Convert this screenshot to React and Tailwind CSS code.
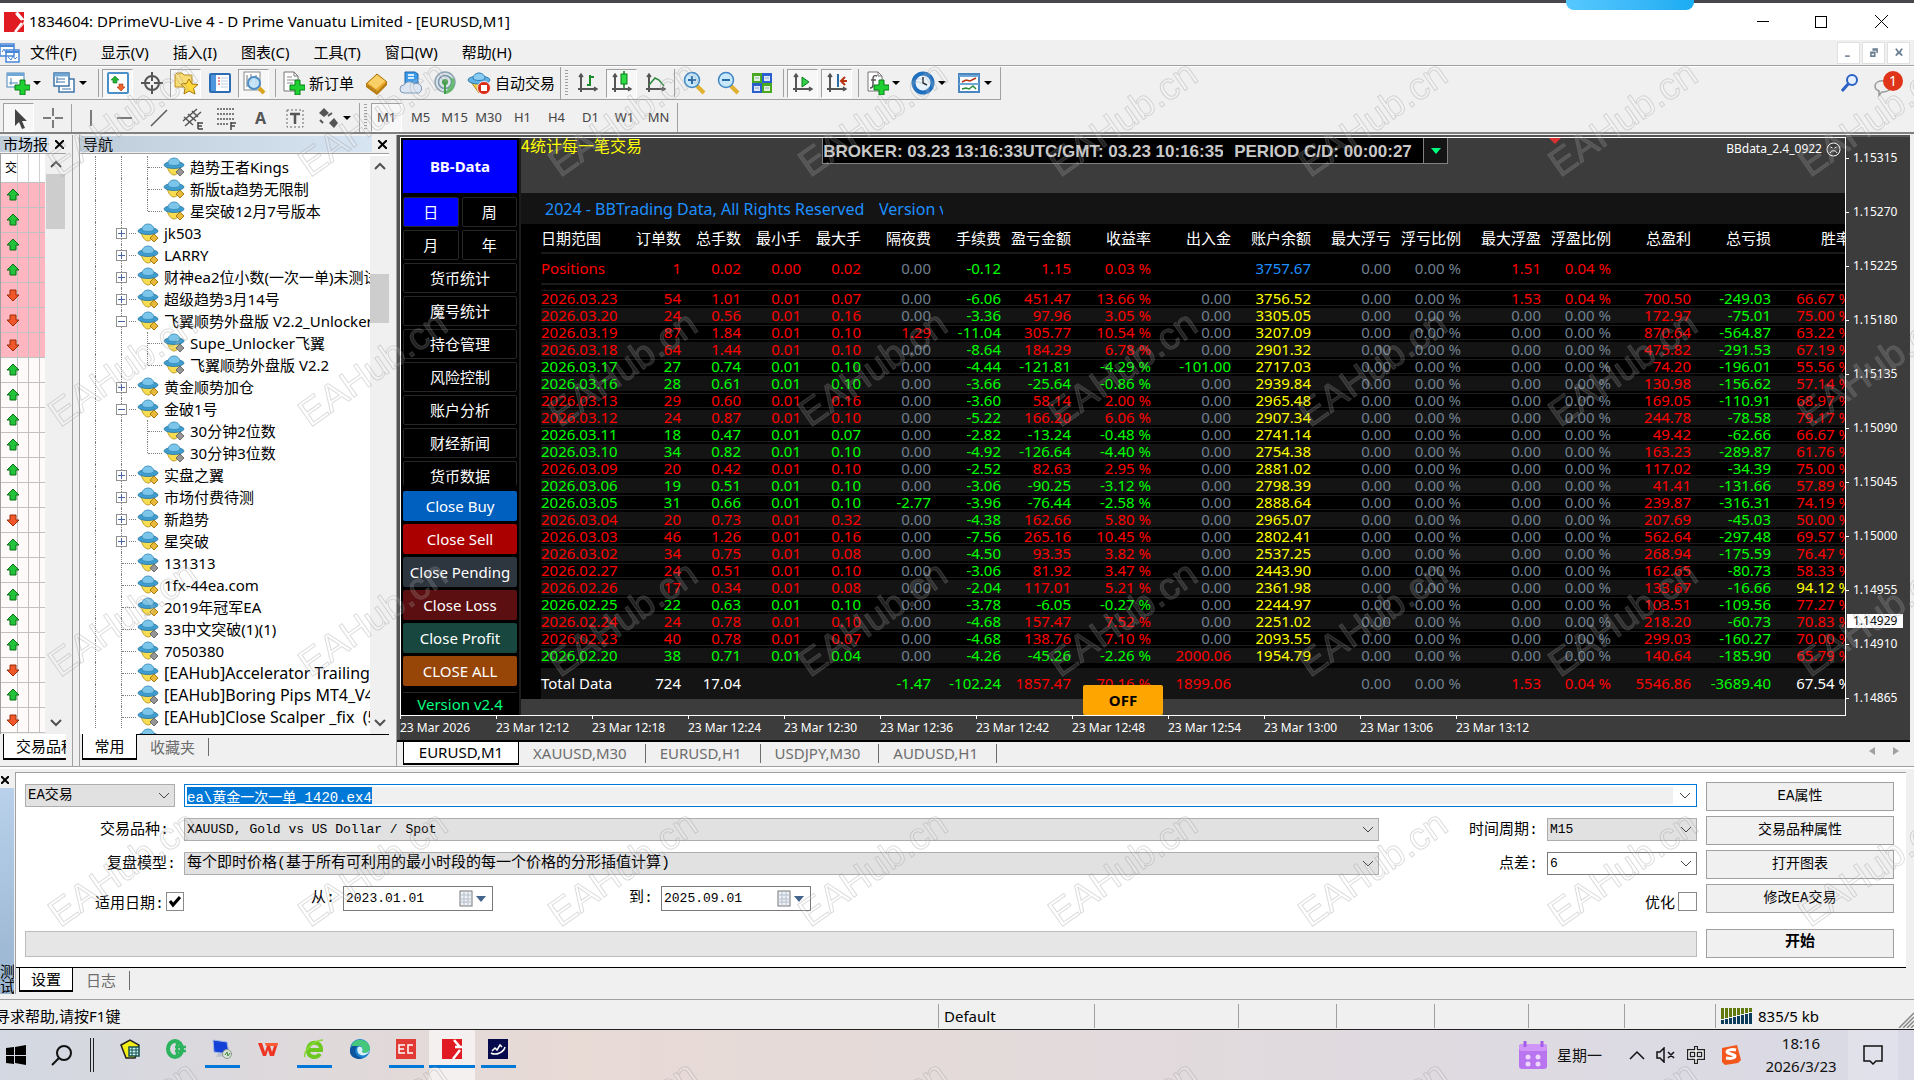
import { useEffect, useRef } from 'react';

const UI = "font-['Noto_Sans','Noto_Sans_CJK_SC',sans-serif]";
const SONG = "font-['Liberation_Mono','Noto_Sans_CJK_SC',monospace]";

/* ---------- data ---------- */

const menus = ['文件(F)', '显示(V)', '插入(I)', '图表(C)', '工具(T)', '窗口(W)', '帮助(H)'];
const frames = ['M1', 'M5', 'M15', 'M30', 'H1', 'H4', 'D1', 'W1', 'MN'];

// u = up tick, d = down tick
const ticks = 'uuuuddduuuuuuduuuuudud'.split('');

// [name, level, toggle, badge]
const tree = [
  ['趋势王者Kings', 2, '', 'gray'],
  ['新版ta趋势无限制', 2, '', 'gold'],
  ['星突破12月7号版本', 2, 'last', 'gold'],
  ['jk503', 1, '+', 'gold'],
  ['LARRY', 1, '+', 'gold'],
  ['财神ea2位小数(一次一单)未测试', 1, '+', 'gold'],
  ['超级趋势3月14号', 1, '+', 'gold'],
  ['飞翼顺势外盘版 V2.2_Unlocker', 1, '-', 'gold'],
  ['Supe_Unlocker飞翼', 2, '', 'gray'],
  ['飞翼顺势外盘版 V2.2', 2, 'last', 'gray'],
  ['黄金顺势加仓', 1, '+', 'gold'],
  ['金破1号', 1, '-', 'gold'],
  ['30分钟2位数', 2, '', 'gray'],
  ['30分钟3位数', 2, 'last', 'gray'],
  ['实盘之翼', 1, '+', 'gold'],
  ['市场付费待测', 1, '+', 'gold'],
  ['新趋势', 1, '+', 'gold'],
  ['星突破', 1, '+', 'gold'],
  ['131313', 1, '', 'gray'],
  ['1fx-44ea.com', 1, '', 'gold'],
  ['2019年冠军EA', 1, '', 'gold'],
  ['33中文突破(1)(1)', 1, '', 'gray'],
  ['7050380', 1, '', 'gray'],
  ['[EAHub]Accelerator Trailing', 1, '', 'gold'],
  ['[EAHub]Boring Pips MT4_V4', 1, '', 'gray'],
  ['[EAHub]Close Scalper _fix  (5)', 1, '', 'gray'],
];

const heads = ['日期范围', '订单数', '总手数', '最小手', '最大手', '隔夜费', '手续费', '盈亏金额', '收益率', '出入金', '账户余额', '最大浮亏', '浮亏比例', '最大浮盈', '浮盈比例', '总盈利', '总亏损', '胜率'];

// date, orders, lots, min, max, swap, commission, p/l, rate, deposit, balance, profit, loss, win rate
const days = [
  '2026.03.23|54|1.01|0.01|0.07|0.00|-6.06|451.47|13.66 %|0.00|3756.52|700.50|-249.03|66.67 %',
  '2026.03.20|24|0.56|0.01|0.16|0.00|-3.36|97.96|3.05 %|0.00|3305.05|172.97|-75.01|75.00 %',
  '2026.03.19|87|1.84|0.01|0.10|1.29|-11.04|305.77|10.54 %|0.00|3207.09|870.64|-564.87|63.22 %',
  '2026.03.18|64|1.44|0.01|0.10|0.00|-8.64|184.29|6.78 %|0.00|2901.32|475.82|-291.53|67.19 %',
  '2026.03.17|27|0.74|0.01|0.10|0.00|-4.44|-121.81|-4.29 %|-101.00|2717.03|74.20|-196.01|55.56 %',
  '2026.03.16|28|0.61|0.01|0.10|0.00|-3.66|-25.64|-0.86 %|0.00|2939.84|130.98|-156.62|57.14 %',
  '2026.03.13|29|0.60|0.01|0.16|0.00|-3.60|58.14|2.00 %|0.00|2965.48|169.05|-110.91|68.97 %',
  '2026.03.12|24|0.87|0.01|0.10|0.00|-5.22|166.20|6.06 %|0.00|2907.34|244.78|-78.58|79.17 %',
  '2026.03.11|18|0.47|0.01|0.07|0.00|-2.82|-13.24|-0.48 %|0.00|2741.14|49.42|-62.66|66.67 %',
  '2026.03.10|34|0.82|0.01|0.10|0.00|-4.92|-126.64|-4.40 %|0.00|2754.38|163.23|-289.87|61.76 %',
  '2026.03.09|20|0.42|0.01|0.10|0.00|-2.52|82.63|2.95 %|0.00|2881.02|117.02|-34.39|75.00 %',
  '2026.03.06|19|0.51|0.01|0.10|0.00|-3.06|-90.25|-3.12 %|0.00|2798.39|41.41|-131.66|57.89 %',
  '2026.03.05|31|0.66|0.01|0.10|-2.77|-3.96|-76.44|-2.58 %|0.00|2888.64|239.87|-316.31|74.19 %',
  '2026.03.04|20|0.73|0.01|0.32|0.00|-4.38|162.66|5.80 %|0.00|2965.07|207.69|-45.03|50.00 %',
  '2026.03.03|46|1.26|0.01|0.16|0.00|-7.56|265.16|10.45 %|0.00|2802.41|562.64|-297.48|69.57 %',
  '2026.03.02|34|0.75|0.01|0.08|0.00|-4.50|93.35|3.82 %|0.00|2537.25|268.94|-175.59|76.47 %',
  '2026.02.27|24|0.51|0.01|0.10|0.00|-3.06|81.92|3.47 %|0.00|2443.90|162.65|-80.73|58.33 %',
  '2026.02.26|17|0.34|0.01|0.08|0.00|-2.04|117.01|5.21 %|0.00|2361.98|133.67|-16.66|94.12 %',
  '2026.02.25|22|0.63|0.01|0.10|0.00|-3.78|-6.05|-0.27 %|0.00|2244.97|103.51|-109.56|77.27 %',
  '2026.02.24|24|0.78|0.01|0.10|0.00|-4.68|157.47|7.52 %|0.00|2251.02|218.20|-60.73|70.83 %',
  '2026.02.23|40|0.78|0.01|0.07|0.00|-4.68|138.76|7.10 %|0.00|2093.55|299.03|-160.27|70.00 %',
  '2026.02.20|38|0.71|0.01|0.04|0.00|-4.26|-45.26|-2.26 %|2000.06|1954.79|140.64|-185.90|65.79 %',
].map((line) => line.split('|'));

const prices = ['1.15315', '1.15270', '1.15225', '1.15180', '1.15135', '1.15090', '1.15045', '1.15000', '1.14955', '1.14910', '1.14865'];
const times = ['2026', '12:12', '12:18', '12:24', '12:30', '12:36', '12:42', '12:48', '12:54', '13:00', '13:06', '13:12'];

const RED = 'text-[#ff0000]';
const GREEN = 'text-[#00ff00]';
const GRAY = 'text-[#708090]';

function signColor(v) {
  const n = parseFloat(v);
  if (n === 0) return GRAY;
  return n < 0 ? GREEN : RED;
}

/* ---------- toolbar icons ---------- */

const Svg = ({ s = 24, children }) => (
  <svg width={s} height={s} viewBox="0 0 24 24" fill="none" className="shrink-0">{children}</svg>
);

const Plus = () => <path d="M14 9h5v5h5v5h-5v5h-5v-5H9v-5h5z" fill="#1fd032" stroke="#0a7d18" />;

const Axes = () => (
  <g stroke="#555" strokeWidth="2">
    <path d="M5 3v18M2 18h19" />
    <path d="M3 6l2-3 2 3M18 16l3 2-3 2" strokeWidth="1.5" />
  </g>
);

const Page = () => (
  <g>
    <path d="M3 1h10l4 4v15H3z" fill="#fff" stroke="#777" />
    <path d="M13 1v4h4" stroke="#777" />
  </g>
);

const icons = {
  newChart: (
    <Svg>
      <rect x="1" y="2" width="17" height="14" fill="#fff" stroke="#4a86b8" />
      <rect x="1" y="2" width="17" height="3" fill="#6fa8d6" />
      <path d="M5 7v7M3 12h9" stroke="#4a86b8" />
      <Plus />
    </Svg>
  ),
  profiles: (
    <Svg>
      <rect x="7" y="8" width="15" height="13" fill="#fff" stroke="#3f74a8" strokeWidth="1.5" />
      <path d="M10 18h9" stroke="#3f74a8" />
      <rect x="2" y="2" width="15" height="13" fill="#fff" stroke="#3f74a8" strokeWidth="1.5" />
      <path d="M2 4h15" stroke="#6fa8d6" strokeWidth="3" />
      <path d="M5 6v6M4 11h9M5 8h8" stroke="#3f74a8" />
    </Svg>
  ),
  market: (
    <Svg>
      <rect x="2" y="2" width="20" height="20" rx="1" fill="#fff" stroke="#4a90c8" strokeWidth="2" />
      <path d="M9 5l4 4h-2v3H7V9H5z" fill="#21b535" stroke="#0a7d18" strokeWidth=".6" />
      <path d="M15 20l-4-4h2v-3h4v3h2z" fill="#f0642d" stroke="#a33208" strokeWidth=".6" />
    </Svg>
  ),
  target: (
    <Svg>
      <circle cx="12" cy="12" r="7" stroke="#555" strokeWidth="2" />
      <path d="M12 1v9M12 14v9M1 12h9M14 12h9" stroke="#555" strokeWidth="2" />
    </Svg>
  ),
  star: (
    <Svg>
      <path d="M1 4l2-2h5l2 2h8v12H1z" fill="#f9dc73" stroke="#b98b1c" />
      <path d="M15 8l3 5 6 .5-4.500 4L21 23l-6-3-5 3 1-6-4-4 5.500-.5z" fill="#ffd93b" stroke="#a87408" />
    </Svg>
  ),
  list: (
    <Svg>
      <rect x="2" y="3" width="20" height="18" rx="1" fill="#fff" stroke="#2c6cb3" strokeWidth="2" />
      <rect x="3" y="4" width="5" height="16" fill="#4f97dc" />
      <path d="M10 7h2M10 10h2M10 13h2" stroke="#d22" />
      <path d="M13 7h7M13 10h7M13 13h7M13 16h7" stroke="#b9cfe6" />
    </Svg>
  ),
  tester: (
    <Svg>
      <rect x="2" y="1" width="16" height="18" fill="#fff" stroke="#888" />
      <path d="M5 4v12M9 3v9M14 4v10" stroke="#777" />
      <circle cx="12" cy="12" r="6" fill="#bfe0f8" fillOpacity=".85" stroke="#4c8ec6" strokeWidth="2" />
      <path d="M17 17l5 5" stroke="#d9a520" strokeWidth="4" />
    </Svg>
  ),
  order: (
    <Svg>
      <Page />
      <path d="M6 6h5M6 9h8M6 12h6" stroke="#888" />
      <Plus />
    </Svg>
  ),
  gold: (
    <Svg>
      <path d="M1 13L12 3l10 8-9 10z" fill="#e8a92a" stroke="#a66d08" />
      <path d="M3 12L12 4l8 6-9 8z" fill="#f8d067" />
      <path d="M1 13v3l11 8 10-10v-3L12 21z" fill="#b87c10" />
    </Svg>
  ),
  cloud: (
    <Svg>
      <path d="M6 1h10l3 2v14H6z" fill="#3f9be8" stroke="#1b66ac" />
      <path d="M9 4h6M9 7h6" stroke="#d6ecff" strokeWidth="2" />
      <path d="M5 22a4 4 0 010-8 6 6 0 0110-1 5 5 0 015 9z" fill="#dbe6f2" stroke="#7f99b8" />
    </Svg>
  ),
  signal: (
    <Svg>
      <circle cx="12" cy="11" r="10" fill="#d9e3ea" stroke="#8fa3b3" strokeWidth="1.500" />
      <circle cx="12" cy="11" r="6.500" stroke="#7b96aa" strokeWidth="1.500" />
      <path d="M15 5a7 7 0 010 12l-3 6c8-1 11-8 9-15z" fill="#52b557" opacity=".8" />
      <circle cx="12" cy="11" r="3" fill="#3fa046" />
      <path d="M12 12v11" stroke="#3fa046" strokeWidth="2" />
    </Svg>
  ),
  auto: (
    <Svg>
      <path d="M4 11l8 11 8-11z" fill="#f7cf45" stroke="#b48512" />
      <ellipse cx="12" cy="9" rx="11" ry="4" fill="#63b3e6" stroke="#2d7cb5" />
      <path d="M6 8c0-8 12-8 12 0-3 2-9 2-12 0z" fill="#8accf2" stroke="#2d7cb5" />
      <circle cx="17" cy="17" r="6.500" fill="#dc2a18" stroke="#fff" strokeWidth=".8" />
      <rect x="14" y="14" width="6" height="6" fill="#fff" />
    </Svg>
  ),
  bars: <Svg><Axes /><path d="M14 4v11M14 6h4M11 14h3" stroke="#1a8a2a" strokeWidth="2" /></Svg>,
  candle: <Svg><Axes /><path d="M14 0v17" stroke="#0a7d18" strokeWidth="1.500" /><rect x="11" y="3" width="6" height="10" fill="#2ddb46" stroke="#0a7d18" /></Svg>,
  line: <Svg><Axes /><path d="M5 14l6-7 4 2 5 6" stroke="#2a8a3a" strokeWidth="1.500" /></Svg>,
  zoomIn: <Svg><path d="M15 15l7 7" stroke="#e0b030" strokeWidth="4" /><circle cx="10" cy="9" r="7.500" fill="#c8e8fb" stroke="#3f86c4" strokeWidth="1.500" /><path d="M6 9h8M10 5v8" stroke="#2a6aa5" strokeWidth="2" /></Svg>,
  zoomOut: <Svg><path d="M15 15l7 7" stroke="#e0b030" strokeWidth="4" /><circle cx="10" cy="9" r="7.500" fill="#c8e8fb" stroke="#3f86c4" strokeWidth="1.500" /><path d="M6 9h8" stroke="#2a6aa5" strokeWidth="2" /></Svg>,
  tile: (
    <Svg>
      <path d="M2 2h10v10H2zM12 12h10v10H12z" fill="#49a820" />
      <path d="M12 2h10v10H12zM2 12h10v10H2z" fill="#2a5fd0" />
      <path d="M4 5h6v5H4zM14 5h6v5h-6zM4 15h6v5H4zM14 15h6v5h-6z" fill="#fff" opacity=".85" />
      <path d="M5 7h4M15 7h4M5 17h4M15 17h4" stroke="#8fb0c8" />
    </Svg>
  ),
  scroll: <Svg><Axes /><path d="M11 6l7 5-7 5z" fill="#2fd048" stroke="#0a7d18" /></Svg>,
  shift: <Svg><Axes /><path d="M13 3v13" stroke="#2a6aa5" strokeWidth="2" /><path d="M22 10h-5m3-4l-4 4 4 4" stroke="#b8320e" strokeWidth="2" /></Svg>,
  indicator: <Svg><Page /><path d="M12 5c-3-1-4 0-4 3v6c0 2-1 3-3 3M6 9h5" stroke="#555" strokeWidth="1.500" /><Plus /></Svg>,
  clock: (
    <Svg>
      <circle cx="12" cy="12" r="9.500" fill="#e8f3fc" stroke="#1f6fc0" strokeWidth="4" />
      <path d="M12 6v6l4 2" stroke="#333" strokeWidth="1.500" />
    </Svg>
  ),
  template: (
    <Svg>
      <rect x="2" y="3" width="20" height="18" fill="#fff" stroke="#4a86c0" strokeWidth="2" />
      <path d="M2 5h20M2 13h20" stroke="#6fa8d6" strokeWidth="2" />
      <path d="M5 11l4-2 4 1 6-3" stroke="#b8320e" strokeWidth="1.500" />
      <path d="M5 18l4-1 3 1 4-3 3 3" stroke="#2a8a3a" strokeWidth="1.500" />
    </Svg>
  ),
  cursor: <Svg><path d="M8 3v17l4-4 3 7 3-1-3-7h5z" fill="#444" /></Svg>,
  cross: <Svg><path d="M12 2v8M12 14v8M2 12h8M14 12h8" stroke="#555" strokeWidth="1.500" /></Svg>,
  vline: <Svg><path d="M12 4v16" stroke="#555" strokeWidth="1.500" /></Svg>,
  hline: <Svg><path d="M4 12h15" stroke="#555" strokeWidth="1.500" /></Svg>,
  trend: <Svg><path d="M4 20L20 4" stroke="#555" strokeWidth="1.500" /></Svg>,
  channel: (
    <Svg>
      <path d="M2 15L16 3M4 20L20 6M3 11l9 8M7 8l8 7M11 5l6 6" stroke="#555" strokeWidth="1.500" />
      <path d="M17 17h5M17 20h4M17 23h5M17 16v7" stroke="#444" strokeWidth="1.500" />
    </Svg>
  ),
  fibo: (
    <Svg>
      <path d="M2 3h18M2 8h18M2 13h18M2 18h11" stroke="#555" strokeDasharray="2 1" strokeWidth="1.500" />
      <path d="M16 17h5M16 20h4M16 16v8" stroke="#444" strokeWidth="1.500" />
    </Svg>
  ),
  label: (
    <Svg>
      <rect x="4" y="4" width="16" height="17" stroke="#666" strokeDasharray="2 2" />
      <path d="M7 8h10M12 8v10" stroke="#555" strokeWidth="2.500" />
    </Svg>
  ),
  shapes: (
    <Svg>
      <path d="M8 2l5 5-5 4-5-4zM18 12l4 5-4 5-5-5z" fill="#555" />
      <path d="M4 14l3 3M12 10l4-3" stroke="#555" strokeWidth="2" />
    </Svg>
  ),
};

const Sep = ({ tight }) => <span className={`h-[28px] w-px shrink-0 bg-[#a0a0a0] ${tight ? 'mr-[3px]' : 'mx-[3px]'}`} />;
const Grip = () => <span className="mx-1 h-[27px] w-[3px] shrink-0 bg-[repeating-linear-gradient(#a0a0a0_0_1px,transparent_1px_3px)]" />;

function Tool({ icon, name, on, children }) {
  return (
    <button
      type="button"
      aria-label={name}
      className={`mr-[3px] flex h-[29px] w-[31px] shrink-0 items-center justify-center ${on ? 'border border-[#a0a0a0] border-r-white border-b-white bg-[#f7f7f7]' : ''}`}
    >
      {icon ? icons[icon] : children}
    </button>
  );
}

function DropTool({ icon, name }) {
  return (
    <button type="button" aria-label={name} className="flex h-[29px] w-[46px] shrink-0 items-center pl-[3px]">
      {icons[icon]}
      <span className="ml-[3px] border-x-4 border-t-4 border-x-transparent border-t-black" />
    </button>
  );
}

function DLogo({ s }) {
  return (
    <svg width={s} height={s} viewBox="0 0 20 20">
      <path d="M0 0h13l-1 3 5 5h3l-1 4-6 8H0z" fill="#e11b22" />
      <path d="M14 0h6v7zM20 12v8h-7z" fill="#e11b22" />
      <path d="M12 1l6 7M18 11l-7 9" stroke="#fff" strokeWidth="2.500" />
    </svg>
  );
}

function TitleBar() {
  return (
    <header className="flex h-[40px] shrink-0 items-center border-t-[3px] border-[#4a464e] bg-white pl-1">
      <DLogo s={20} />
      <h1 className="ml-[5px] text-[15px] whitespace-nowrap text-black">1834604: DPrimeVU-Live 4 - D Prime Vanuatu Limited - [EURUSD,M1]</h1>
      <div className="ml-auto flex items-center pr-[2px]">
        <button type="button" aria-label="最小化" className="flex w-[58px] justify-center"><span className="h-px w-3 bg-black" /></button>
        <button type="button" aria-label="最大化" className="flex w-[58px] justify-center"><span className="h-3 w-3 border border-black" /></button>
        <button type="button" aria-label="关闭" className="flex w-[62px] justify-center">
          <svg width="13" height="13" viewBox="0 0 13 13" stroke="#000"><path d="M0 0l13 13M13 0L0 13" /></svg>
        </button>
      </div>
    </header>
  );
}

function MenuBar() {
  return (
    <nav className="flex h-[26px] shrink-0 items-center border-b border-[#a0a0a0] bg-[#f0f0f0]">
      <svg width="20" height="20" viewBox="0 0 20 20" fill="#fff" stroke="#4a86d8">
        <path d="M0 1h14v12H0zM6 7h13v12H6z" strokeWidth="1.500" />
        <path d="M0 3h14M6 9h13" strokeWidth="2" />
        <path d="M2 9l2-3 2 4M8 14l3 3 2-4 2 3 2-2" fill="none" />
      </svg>
      <ul className="ml-[10px] flex gap-[24px] text-[15px]">
        {menus.map((m) => (
          <li key={m}><button type="button" className="whitespace-nowrap">{m}</button></li>
        ))}
      </ul>
      <div className="mr-1 ml-auto flex gap-[2px]">
        {['M4 12h6v2H4z', 'M7 3h7v6h-2V6H7zM4 7h7v7H4zM6 10v2h3v-2z', 'M4 4l2-1 3 4 3-4 2 1-3 4 3 4-2 1-3-3-3 3-2-1 3-4z'].map((d) => (
          <button type="button" aria-label="窗口控制" key={d} className="flex h-[22px] w-[23px] items-center justify-center border border-[#e0e0e0] bg-white">
            <svg width="14" height="14" viewBox="0 0 18 18" fill="#6c7f93" fillRule="evenodd"><path d={d} /></svg>
          </button>
        ))}
      </div>
    </nav>
  );
}

function Toolbars() {
  return (
    <div className="flex h-[68px] shrink-0 border-t border-b-2 border-t-white border-b-[#808080] bg-[#f0f0f0]">
      <div className="flex flex-col">
        <div className="flex h-[33px] items-center border-r border-b border-[#a0a0a0] pl-[3px]">
          <DropTool icon="newChart" name="新图表" />
          <DropTool icon="profiles" name="配置" />
          <Sep />
          <Tool icon="market" name="市场报价" on />
          <Tool icon="target" name="数据窗口" />
          <Tool icon="star" name="导航" on />
          <Tool icon="list" name="终端" />
          <Tool icon="tester" name="策略测试" on />
          <Sep />
          <button type="button" className="flex h-[29px] w-[82px] shrink-0 items-center gap-1 pl-[2px] text-[15px] whitespace-nowrap">
            {icons.order}新订单
          </button>
          <Tool icon="gold" name="MetaEditor" />
          <Tool icon="cloud" name="云" />
          <Tool icon="signal" name="信号" />
          <button type="button" className="flex h-[29px] w-[97px] shrink-0 items-center gap-1 pl-1 text-[15px] whitespace-nowrap">
            {icons.auto}自动交易
          </button>
          <span className="h-full w-px bg-[#a0a0a0]" />
          <Grip />
          <Tool icon="bars" name="柱状图" />
          <Tool icon="candle" name="阴阳烛" on />
          <Tool icon="line" name="折线图" />
          <Sep tight />
          <Tool icon="zoomIn" name="放大" />
          <Tool icon="zoomOut" name="缩小" />
          <Tool icon="tile" name="排列" />
          <Sep />
          <Tool icon="scroll" name="滚动" on />
          <Tool icon="shift" name="平移" on />
          <Sep />
          <DropTool icon="indicator" name="指标" />
          <DropTool icon="clock" name="周期" />
          <DropTool icon="template" name="模板" />
        </div>
        <div className="flex h-[32px] items-center pt-[3px] pl-[3px]">
          <Tool icon="cursor" name="指针" on />
          <Tool icon="cross" name="十字" />
          <Sep tight />
          <Tool icon="vline" name="垂直线" />
          <Tool icon="hline" name="水平线" />
          <Tool icon="trend" name="趋势线" />
          <Tool icon="channel" name="通道" />
          <Tool icon="fibo" name="斐波那契" />
          <Tool name="文字"><b className="text-[16px] text-[#555]">A</b></Tool>
          <Tool icon="label" name="标签" />
          <DropTool icon="shapes" name="图形" />
          <span className="h-full w-px bg-[#a0a0a0]" />
          <Grip />
          {frames.map((f) => (
            <Tool key={f} name={f} on={f === 'M1'}><span className="text-[13px] text-[#444]">{f}</span></Tool>
          ))}
          <span className="h-full w-px bg-[#a0a0a0]" />
        </div>
      </div>
      <div className="ml-auto flex items-start gap-[14px] pt-[4px] pr-[7px]">
        <button type="button" aria-label="搜索" className="pt-[3px]">
          <svg width="18" height="18" viewBox="0 0 18 18" fill="none" stroke="#2b62c4">
            <circle cx="11" cy="6" r="5" fill="#e5efff" strokeWidth="2" />
            <path d="M8 9l-7 8" strokeWidth="3" />
          </svg>
        </button>
        <button type="button" aria-label="消息">
          <svg width="34" height="26" viewBox="0 0 34 26">
            <path d="M2 15c0-7 16-7 16 0 0 5-6 6-9 6l-3 3v-4c-3-1-4-3-4-5z" fill="#eee" stroke="#999" strokeWidth="1.500" />
            <circle cx="20" cy="10" r="10" fill="#e0341a" />
            <text x="20" y="15" fill="#fff" fontSize="14" textAnchor="middle">1</text>
          </svg>
        </button>
      </div>
    </div>
  );
}

/* ---------- left docks ---------- */

function Chevron({ down }) {
  return (
    <svg width="12" height="8" viewBox="0 0 12 8" fill="none" stroke="#505050" strokeWidth="2" className={down ? '' : 'rotate-180'}>
      <path d="M1 1l5 5 5-5" />
    </svg>
  );
}

function ScrollBar({ thumb }) {
  return (
    <div className="flex w-[19px] shrink-0 flex-col items-center bg-[#f0f0f0]">
      <div className="flex h-[20px] items-center"><Chevron /></div>
      <div className="w-full flex-1"><div className={`bg-[#cdcdcd] ${thumb}`} /></div>
      <div className="flex h-[22px] items-center"><Chevron down /></div>
    </div>
  );
}

function DockHead({ title }) {
  return (
    <div className="flex h-[19px] shrink-0 items-center border-b border-[#a0a0a0]">
      <h2 className="h-[16px] min-w-0 flex-1 overflow-hidden bg-linear-to-r from-[#bfcddb] to-[#d7e4f2] pl-[3px] text-[15px] leading-[16px] whitespace-nowrap">{title}</h2>
      <button type="button" aria-label="关闭" className="flex w-[17px] justify-end pr-[2px]">
        <svg width="9" height="9" viewBox="0 0 9 9" stroke="#000" strokeWidth="2"><path d="M0 0l9 9M9 0L0 9" /></svg>
      </button>
    </div>
  );
}

function Arrow({ dir }) {
  return dir === 'u' ? (
    <svg width="14" height="14" viewBox="0 0 14 14"><path d="M7 1l6 6h-3v5H4V7H1z" fill="#22c23a" stroke="#0a6f16" /></svg>
  ) : (
    <svg width="14" height="14" viewBox="0 0 14 14"><path d="M7 13l6-6h-3V2H4v5H1z" fill="#f0582a" stroke="#9c2c08" /></svg>
  );
}

function MarketWatch() {
  return (
    <section className="flex w-[73px] shrink-0 flex-col border-r border-[#a0a0a0] pr-[6px]">
      <DockHead title="市场报价" />
      <div className="flex min-h-0 flex-1 overflow-hidden border-l border-[#a0a0a0]">
        <table className="w-[44px] table-fixed border-collapse self-start text-[12px]">
          <colgroup><col className="w-[16px]" /><col className="w-[11px]" /><col className="w-[11px]" /><col /></colgroup>
          <thead>
            <tr className="h-[28px] border-b border-[#c0c0c0] bg-white">
              <th className="overflow-hidden border-r border-[#d0d0d0] pl-1 text-left font-normal">交</th>
              <th className="border-r border-[#d0d0d0]" /><th className="border-r border-[#d0d0d0]" /><th />
            </tr>
          </thead>
          <tbody>
            {ticks.map((t, i) => (
              <tr key={i} className={`h-[25px] border-b border-[#c0c0c0] ${i < 7 ? 'bg-[#ffb6c1]' : 'bg-[#fffafa]'}`}>
                <td className="border-r border-[#c0c0c0] pl-[5px]"><div className="w-[11px]"><Arrow dir={t} /></div></td>
                <td className="border-r border-[#c0c0c0]" /><td className="border-r border-[#c0c0c0]" /><td />
              </tr>
            ))}
          </tbody>
        </table>
        <span className="w-px" />
        <ScrollBar thumb="h-[55px]" />
      </div>
      <div className="mb-[6px] ml-[3px] h-[26px] shrink-0 overflow-hidden border-b-2 border-l border-black bg-white pl-[12px] text-[15px] leading-[24px] whitespace-nowrap">交易品种</div>
    </section>
  );
}

function Expert({ badge }) {
  return (
    <svg width="22" height="20" viewBox="0 0 22 20" className="shrink-0">
      <path d="M4 9c1 5 4 9 7 9s6-4 7-9z" fill="#f8dc50" stroke="#b08c18" strokeWidth=".8" />
      <ellipse cx="11" cy="8" rx="10" ry="3.500" fill="#3f9ed0" stroke="#26749f" strokeWidth=".8" />
      <path d="M5 7c0-8 12-8 12 0-3 2-9 2-12 0z" fill="#7cc5ea" stroke="#3488b5" strokeWidth=".8" />
      <path d="M17 11l4 4-4 4-4-4z" fill={badge === 'gold' ? '#e8b93a' : '#969696'} stroke={badge === 'gold' ? '#a67c10' : '#6a6a6a'} />
    </svg>
  );
}

function TreeRow({ name, level, toggle, badge }) {
  return (
    <li className="flex h-[22px] items-center whitespace-nowrap">
      <span className="h-full w-[16px] shrink-0 border-r border-dotted border-[#808080]" />
      {level === 1 ? (
        <span className="flex h-full w-[41px] shrink-0 items-center">
          <span className="flex h-full w-[26px] shrink-0 items-center justify-end border-r border-dotted border-[#808080]">
            {toggle && (
              <span className="relative left-[6px] flex h-[11px] w-[11px] shrink-0 items-center justify-center border border-[#919191] bg-white">
                <svg width="7" height="7" viewBox="0 0 7 7" stroke="#4b63a7"><path d={toggle === '+' ? 'M0 3.500h7M3.500 0v7' : 'M0 3.500h7'} /></svg>
              </span>
            )}
          </span>
          <span className={`border-t border-dotted border-[#808080] ${toggle ? 'ml-[7px] w-[7px]' : 'w-[14px]'}`} />
        </span>
      ) : (
        <span className="flex h-full w-[67px] shrink-0">
          <span className="h-full w-[26px] shrink-0 border-r border-dotted border-[#808080]" />
          <span className={`w-[26px] shrink-0 border-r border-dotted border-[#808080] ${toggle === 'last' ? 'h-[11px]' : 'h-full'}`} />
          <span className="mt-[11px] w-[14px] border-t border-dotted border-[#808080]" />
        </span>
      )}
      <Expert badge={badge} />
      <span className={`ml-[5px] whitespace-pre ${name.startsWith('[') ? 'text-[16px]' : ''}`}>{name}</span>
    </li>
  );
}

function Navigator() {
  return (
    <section className="ml-[6px] flex w-[318px] shrink-0 flex-col border-x border-[#a0a0a0] pr-[7px]">
      <DockHead title="导航" />
      <div className="flex min-h-0 flex-1 bg-white pt-[2px]">
        <ul className="min-w-0 flex-1 overflow-hidden text-[15px] leading-[22px] text-black">
          {tree.map(([name, level, toggle, badge]) => (
            <TreeRow key={name} name={name} level={level} toggle={toggle} badge={badge} />
          ))}
          <li className="pl-[57px]"><Expert badge="gray" /></li>
        </ul>
        <ScrollBar thumb="mt-[98px] h-[49px]" />
      </div>
      <div className="mb-[6px] flex h-[26px] shrink-0 text-[15px] leading-[24px]">
        <button type="button" className="ml-[2px] w-[55px] border-x border-b-2 border-black bg-white">常用</button>
        <div className="flex flex-1 items-start border-t border-black pt-[3px]">
          <button type="button" className="border-r border-[#6d6d6d] px-[13px] leading-[18px] text-[#6d6d6d]">收藏夹</button>
        </div>
      </div>
    </section>
  );
}

/* ---------- chart ---------- */

const side = ['货币统计', '魔号统计', '持仓管理', '风险控制', '账户分析', '财经新闻'];
const closers = [
  ['Close Buy', 'bg-[#0060c0]'],
  ['Close Sell', 'bg-[#aa0000]'],
  ['Close Pending', 'bg-[#2d353f]'],
  ['Close Loss', 'bg-[#5c0f10]'],
  ['Close Profit', 'bg-[#17473f]'],
  ['CLOSE ALL', 'bg-[#984608]'],
];

function SidePanel() {
  return (
    <aside className="flex w-[120px] shrink-0 flex-col gap-[3px] border-r-2 border-[#1c1c1c] bg-black px-[2px] pt-[2px] text-[15px] text-white">
      <button type="button" className="mb-px h-[53px] shrink-0 bg-[#0000ff] font-bold">BB-Data</button>
      <div className="grid grid-cols-2 gap-[3px]">
        {['日', '周', '月', '年'].map((t) => (
          <button type="button" key={t} className={`h-[30px] rounded-xs border border-[#262626] ${t === '日' ? 'bg-[#0000ff]' : ''}`}>{t}</button>
        ))}
      </div>
      {side.map((t) => (
        <button type="button" key={t} className="h-[30px] shrink-0 rounded-xs border border-[#262626]">{t}</button>
      ))}
      <button type="button" className="mb-[2px] h-[25px] shrink-0 rounded-xs border border-b-0 border-[#262626] pt-[3px] leading-[22px]">货币数据</button>
      {closers.map(([t, bg]) => (
        <button type="button" key={t} className={`h-[30px] shrink-0 rounded-xs whitespace-nowrap ${bg}`}>{t}</button>
      ))}
      <p className="mt-[3px] flex-1 border-t border-[#262626] text-center leading-[22px] text-[#00ff7f]">Version v2.4</p>
    </aside>
  );
}

function Row({ cells, className }) {
  return (
    <tr className={className}>
      {cells.map(([v, c], i) => (
        <td key={i} className={`p-0 whitespace-nowrap ${i ? 'text-right' : 'text-left'} ${c}`}>{v}</td>
      ))}
    </tr>
  );
}

function dayCells(d, i) {
  const main = signColor(d[7]);
  const dd = i === 0 ? [['0.00', GRAY], ['0.00 %', GRAY], ['1.53', RED], ['0.04 %', RED]] : [['0.00', GRAY], ['0.00 %', GRAY], ['0.00', GRAY], ['0.00 %', GRAY]];
  return [
    ...d.slice(0, 5).map((v) => [v, main]),
    [d[5], signColor(d[5])],
    [d[6], GREEN],
    [d[7], main],
    [d[8], main],
    [d[9], signColor(d[9])],
    [d[10], 'text-[#ffff00]'],
    ...dd,
    [d[11], RED],
    [d[12], GREEN],
    [d[13], parseFloat(d[13]) > 90 ? 'text-[#ffff00]' : RED],
  ];
}

function Report() {
  const none = ['', ''];
  const positions = [['Positions', RED], ['1', RED], ['0.02', RED], ['0.00', RED], ['0.02', RED], ['0.00', GRAY], ['-0.12', GREEN], ['1.15', RED], ['0.03 %', RED], none, ['3757.67', 'text-[#1e90ff]'], ['0.00', GRAY], ['0.00 %', GRAY], ['1.51', RED], ['0.04 %', RED], none, none, none];
  const total = [['Total Data', 'text-white'], ['724', 'text-white'], ['17.04', 'text-white'], none, none, ['-1.47', GREEN], ['-102.24', GREEN], ['1857.47', RED], ['70.16 %', RED], ['1899.06', RED], none, ['0.00', GRAY], ['0.00 %', GRAY], ['1.53', RED], ['0.04 %', RED], ['5546.86', RED], ['-3689.40', GREEN], ['67.54 %', 'text-white']];
  return (
    <div className="overflow-hidden bg-black text-[15px]">
      <div className="flex h-[31px] items-center bg-[#141414] pl-[24px] text-[16px] text-[#1e90ff]">
        <span className="w-[334px] whitespace-nowrap">2024 - BBTrading Data, All Rights Reserved</span>
        <span className="w-[64px] overflow-hidden whitespace-nowrap">Version v2.4</span>
      </div>
      <table className="ml-[20px] w-[1310px] table-fixed border-collapse leading-[15px]">
        <colgroup>
          <col className="w-[80px]" /><col className="w-[60px]" /><col className="w-[60px]" /><col className="w-[60px]" /><col className="w-[60px]" />
          <col className="w-[70px]" /><col className="w-[70px]" /><col className="w-[70px]" /><col className="w-[80px]" /><col className="w-[80px]" /><col className="w-[80px]" />
          <col className="w-[80px]" /><col className="w-[70px]" /><col className="w-[80px]" /><col className="w-[70px]" /><col className="w-[80px]" /><col className="w-[80px]" /><col className="w-[80px]" />
        </colgroup>
        <thead>
          <tr className="h-[29px] text-white">
            {heads.map((h, i) => (
              <th key={h} className={`p-0 font-normal whitespace-nowrap ${i ? 'text-right' : 'text-left'}`}>{h}</th>
            ))}
          </tr>
        </thead>
        <tbody>
          <Row cells={positions} className="h-[31px] border-y-2 border-[#1a1a1a]" />
          <tr className="h-[6px]"><td colSpan={18} className="p-0" /></tr>
          {days.map((d, i) => (
            <Row
              key={d[0]}
              cells={dayCells(d, i)}
              className={`h-[17px] border-b-2 border-black ${i % 2 ? 'bg-[#141414]' : 'bg-black [&>td]:shadow-[inset_0_1px_#1c1c1c,inset_0_-1px_#1c1c1c]'}`}
            />
          ))}
        </tbody>
        <tfoot>
          <tr className="h-[4px]"><td colSpan={18} className="p-0" /></tr>
          <Row cells={total} className="h-[31px] bg-[#141414]" />
        </tfoot>
      </table>
    </div>
  );
}

function BrokerBar() {
  return (
    <div className="flex h-[26px] w-[626px] shrink-0 border border-t-0 border-[#808080] bg-black text-[17px] leading-[27px] font-bold whitespace-nowrap text-[#c8c8c8] font-['Liberation_Sans',sans-serif]">
      {['BROKER: 03.23 13:16:33', 'UTC/GMT: 03.23 10:16:35', 'PERIOD C/D: 00:00:27'].map((t) => (
        <span key={t} className="flex w-[200px] justify-center overflow-hidden">{t}</span>
      ))}
      <button type="button" aria-label="展开" className="flex flex-1 items-center justify-center border-l border-[#808080] bg-[#141414]">
        <span className="border-x-[5px] border-t-[6px] border-x-transparent border-t-[#00ff7f]" />
      </button>
    </div>
  );
}

function Chart() {
  return (
    <section className="flex min-h-0 min-w-0 flex-1 flex-col">
      <div className="flex min-h-0 flex-1 flex-col border-t-2 border-l-[3px] border-[#555] bg-[#3c3c3c] text-[12px] text-white">
        <div className="flex min-h-0 flex-1">
          <div className="relative flex min-w-0 flex-1 overflow-hidden border border-white">
            <SidePanel />
            <div className="min-w-0 flex-1">
              <div className="flex h-[55px] items-start">
                <p className="w-[301px] text-[16px] leading-[14px] whitespace-nowrap text-[#ffff00] font-['Noto_Sans_CJK_SC',sans-serif]">4统计每一笔交易</p>
                <BrokerBar />
                <span className="ml-[101px] border-x-[6px] border-t-[6px] border-x-transparent border-t-[#d93030]" />
                <p className="mr-[4px] ml-auto flex items-center gap-1 pt-[2px]">
                  BBdata_2.4_0922
                  <svg width="15" height="15" viewBox="0 0 15 15" fill="none" stroke="#fff">
                    <circle cx="7.500" cy="7.500" r="6.500" />
                    <path d="M4 11c1-3 6-3 7 0M4.500 5l2 1M10.500 5l-2 1" />
                  </svg>
                </p>
              </div>
              <Report />
            </div>
            <button type="button" className="absolute bottom-0 left-[682px] h-[30px] w-[80px] rounded-xs bg-[#ffa500] text-[15px] font-bold text-black">OFF</button>
          </div>
          <div className="relative w-[64px] shrink-0 pt-[14px]">
            {prices.map((p) => (
              <div key={p} className="flex h-[54px] items-start leading-[14px]">
                <span className="mt-[7px] mr-[4px] h-px w-[3px] bg-white" />{p}
              </div>
            ))}
            <span className="absolute top-[477px] left-px w-[56px] bg-white pl-[6px] leading-[14px] text-black">1.14929</span>
          </div>
        </div>
        <div className="flex h-[24px] shrink-0">
          {times.map((t) => (
            <div key={t} className="w-[96px] shrink-0 whitespace-nowrap">
              <span className="block h-[3px] w-px bg-white" />
              <span className="block leading-[17px]">23 Mar {t}</span>
            </div>
          ))}
        </div>
      </div>
      <div className="flex h-[26px] shrink-0 items-start border-t-2 border-black bg-[#f0f0f0] pl-[6px] text-[15px] text-[#6d6d6d]">
        <button type="button" className="h-[23px] w-[116px] border-x border-b-2 border-black bg-white leading-[21px] text-black">EURUSD,M1</button>
        {['XAUUSD,M30', 'EURUSD,H1', 'USDJPY,M30', 'AUDUSD,H1'].map((t) => (
          <button type="button" key={t} className="mt-[2px] border-r border-[#6d6d6d] pr-[18px] pl-[14px] leading-[19px]">{t}</button>
        ))}
        <div className="mt-[5px] mr-[11px] ml-auto flex gap-[18px]">
          <span className="border-y-4 border-r-[6px] border-y-transparent border-r-[#a0a0a0]" />
          <span className="border-y-4 border-l-[6px] border-y-transparent border-l-[#a0a0a0]" />
        </div>
      </div>
    </section>
  );
}

/* ---------- strategy tester ---------- */

const Pick = ({ className, id, label, children }) => (
  <div className={`relative flex h-[23px] items-center border ${className}`}>
    <select id={id} aria-label={label} className="h-full w-full appearance-none pl-[2px] outline-none">
      <option>{children}</option>
    </select>
    <svg width="10" height="6" viewBox="0 0 10 6" fill="none" stroke="#444" className="pointer-events-none absolute right-[5px]"><path d="M0 0l5 5 5-5" /></svg>
  </div>
);

function DateBox({ id, value }) {
  return (
    <div className="flex h-[25px] w-[150px] items-center border border-[#7a7a7a] bg-white pr-[5px]">
      <input id={id} defaultValue={value} className="w-[110px] pl-[2px] text-[13px] outline-none" />
      <svg width="28" height="17" viewBox="0 0 28 17" className="ml-auto">
        <rect x="1" y="1" width="12" height="15" fill="#eef1f5" stroke="#777" />
        <path d="M1 5h12M1 9h12M1 12h12M5 2v14M9 2v14" stroke="#b5bfcc" />
        <path d="M17 6h10l-5 6z" fill="#44648c" />
      </svg>
    </div>
  );
}

function Tester() {
  const expert = useRef(null);
  useEffect(() => {
    expert.current.focus();
    expert.current.select();
  }, []);

  return (
    <section className="flex shrink-0 border-t-2 border-white bg-[#f0f0f0] pt-[3px] pr-[8px] pb-[5px]">
      <div className="flex w-[15px] shrink-0 flex-col">
        <button type="button" aria-label="关闭" className="flex h-[16px] items-center pl-px">
          <svg width="8" height="8" viewBox="0 0 8 8" stroke="#000" strokeWidth="2"><path d="M0 0l8 8M8 0L0 8" /></svg>
        </button>
        <h2 className="flex w-[14px] flex-1 items-end overflow-hidden bg-linear-to-b from-[#b9d1ea] to-[#99b4d1] text-[15px] leading-[14px] [writing-mode:vertical-rl]">
          <span className="flex flex-1 justify-end">测试</span>
        </h2>
      </div>
      <div className="min-w-0 flex-1 border-t border-l border-[#a0a0a0]">
        <form className={`flex gap-[9px] border-b border-black bg-white pt-[9px] pr-[12px] pb-[9px] pl-[9px] text-[15px] ${SONG}`}>
          <div className="min-w-0 flex-1 pt-[2px]">
            <div className="flex h-[34px] gap-[9px]">
              <Pick label="类型" className="w-[150px] border-[#adadad] bg-[#e1e1e1] text-[14px]">EA交易</Pick>
              <div className="flex h-[23px] flex-1 items-center border border-[#0078d7] bg-white py-[2px] pl-[2px]">
                <input
                  ref={expert}
                  aria-label="EA文件"
                  defaultValue="ea\黄金一次一单_1420.ex4"
                  className="h-full min-w-0 flex-1 bg-[#f0f0f0] text-[14px] outline-none selection:bg-[#0078d7] selection:text-white"
                />
                <span className="flex w-[23px] justify-center"><svg width="10" height="6" viewBox="0 0 10 6" fill="none" stroke="#444"><path d="M0 0l5 5 5-5" /></svg></span>
              </div>
            </div>
            <div className="flex h-[34px]">
              <label htmlFor="symbol" className="w-[159px] pl-[75px] leading-[26px]">交易品种:</label>
              <Pick id="symbol" className="flex-1 border-[#adadad] bg-[#e1e1e1] text-[13px]">XAUUSD, Gold vs US Dollar / Spot</Pick>
              <label htmlFor="period" className="w-[168px] pr-[9px] text-right leading-[26px]">时间周期:</label>
              <Pick id="period" className="w-[150px] border-[#adadad] bg-[#e1e1e1] text-[13px]">M15</Pick>
            </div>
            <div className="flex h-[34px]">
              <label htmlFor="model" className="w-[159px] pl-[82px] leading-[26px]">复盘模型:</label>
              <Pick id="model" className="flex-1 border-[#adadad] bg-[#e1e1e1]">每个即时价格(基于所有可利用的最小时段的每一个价格的分形插值计算)</Pick>
              <label htmlFor="spread" className="w-[168px] pr-[9px] text-right leading-[26px]">点差:</label>
              <Pick id="spread" className="w-[150px] border-[#7a7a7a] bg-white text-[13px]">6</Pick>
            </div>
            <div className="flex h-[45px] items-start">
              <label htmlFor="usedate" className="w-[141px] pt-[6px] pl-[70px] leading-[26px]">适用日期:</label>
              <span className="relative mt-[6px] flex h-[19px] w-[18px] items-center justify-center">
                <input id="usedate" type="checkbox" defaultChecked className="h-full w-full appearance-none border border-[#8a8a8a] bg-white" />
                <svg width="12" height="12" viewBox="0 0 12 12" fill="none" stroke="#000" strokeWidth="3" className="pointer-events-none absolute"><path d="M1 5l3 4 7-8" /></svg>
              </span>
              <label htmlFor="from" className="w-[159px] pr-[8px] text-right leading-[26px]">从:</label>
              <DateBox id="from" value="2023.01.01" />
              <label htmlFor="to" className="w-[168px] pr-[8px] text-right leading-[26px]">到:</label>
              <DateBox id="to" value="2025.09.01" />
              <label htmlFor="optimize" className="ml-auto pt-[6px] pr-[3px] leading-[26px]">优化</label>
              <input id="optimize" type="checkbox" className="mt-[6px] h-[19px] w-[19px] appearance-none border border-[#8a8a8a] bg-white" />
            </div>
            <div className="h-[26px] border border-[#bcbcbc] bg-[#e6e6e6]" />
          </div>
          <div className="flex w-[188px] flex-col gap-[5px] text-[14px]">
            {['EA属性', '交易品种属性', '打开图表', '修改EA交易'].map((t) => (
              <button type="button" key={t} className="h-[29px] border border-[#a0a0a0] bg-[#f0f0f0]">{t}</button>
            ))}
            <button type="button" className="mt-[11px] h-[29px] border border-[#a0a0a0] bg-[#f0f0f0] text-[15px] font-bold">开始</button>
          </div>
        </form>
        <div className="flex h-[26px] items-start pl-[3px] text-[15px]">
          <button type="button" className="h-[24px] w-[54px] border-x border-b-2 border-black bg-white leading-[22px]">设置</button>
          <button type="button" className="mt-[3px] border-r border-[#6d6d6d] px-[13px] leading-[19px] text-[#6d6d6d]">日志</button>
        </div>
      </div>
    </section>
  );
}

function StatusBar() {
  return (
    <footer className="flex h-[31px] shrink-0 items-center border-t border-b border-t-[#a0a0a0] border-b-[#202020] bg-[#f0f0f0] pt-[3px] text-[15px] whitespace-nowrap">
      <p className="-ml-[5px] flex-1">寻求帮助,请按F1键</p>
      <p className="flex h-[24px] w-[156px] items-center border-l border-[#a0a0a0] pl-[5px]">Default</p>
      <span className="h-[24px] w-[144px] border-l border-[#a0a0a0]" />
      <span className="h-[24px] w-[98px] border-l border-[#a0a0a0]" />
      <span className="h-[24px] w-[98px] border-l border-[#a0a0a0]" />
      <span className="h-[24px] w-[94px] border-l border-[#a0a0a0]" />
      <span className="h-[24px] w-[96px] border-l border-[#a0a0a0]" />
      <span className="h-[24px] w-[91px] border-l border-[#a0a0a0]" />
      <p className="flex h-[24px] w-[199px] items-center gap-[5px] border-l border-[#a0a0a0] pl-[5px]">
        <svg width="32" height="16" viewBox="0 0 32 16">
          {[0, 1, 2, 3, 4, 5, 6, 7].map((i) => (
            <g key={i}>
              <rect x={i * 4} y="0" width="3" height={11 - i} fill="#5f7a0b" />
              <rect x={i * 4} y={12 - i} width="3" height={4 + i} fill="#0c3c5c" />
            </g>
          ))}
        </svg>
        835/5 kb
        <svg width="16" height="16" viewBox="0 0 16 16" stroke="#888" className="mt-auto ml-auto"><path d="M1 16L16 1M5 16L16 5M9 16l7-7M13 16l3-3" strokeWidth="1.500" /></svg>
      </p>
    </footer>
  );
}

/* ---------- taskbar ---------- */

const apps = [
  ['画图', '', <path key="a" d="M1 6l9-5 9 5-4 13H6z" fill="#f4ee18" stroke="#222" strokeWidth="1.500" />, <g key="b"><rect x="9" y="8" width="10" height="9" fill="#c9f4f4" stroke="#174f4f" strokeWidth="1.500" /><path d="M9 11h10M9 14h10M12 8v9M16 8v9" stroke="#174f4f" /></g>],
  ['浏览器', '', <ellipse key="a" cx="9" cy="10" rx="7" ry="8" stroke="#2bb35d" strokeWidth="4" fill="none" />, <path key="b" d="M11 4v12M9 8h11M9 12h11" stroke="#2bb35d" strokeWidth="2.500" />],
  ['远程桌面', 'line', <path key="a" d="M1 1l14 2 2 12-15-2z" fill="#1540d8" stroke="#9fb6e8" />, <g key="b"><path d="M4 18l12-1-2-3H6z" fill="#b9c3cf" /><circle cx="15" cy="15" r="4.500" fill="#d8e0d8" stroke="#8a9a8a" /><path d="M13 16l2-3 1 4 2-3" stroke="#3c8a3c" fill="none" /></g>],
  ['WPS', '', <path key="a" d="M0 4h4l3 9 2-6h3l2 6 3-9h3l-4 13h-4l-2-6-2 6H5z" fill="#ee3524" />, <path key="b" d="M7 4h13l-1 3H8z" fill="#ff5a36" />],
  ['极速浏览器', 'line', <path key="a" d="M4 11h13c1-9-12-10-13-1-1 9 9 10 12 5" stroke="#6cc81e" strokeWidth="4" fill="none" />, <path key="b" d="M1 18c-2-5 8-17 18-17" stroke="#8ad83c" strokeWidth="1.500" fill="none" />],
  ['Edge', '', <circle key="a" cx="10" cy="10" r="10" fill="#1780cf" />, <g key="b"><path d="M2 5c5-8 17-4 18 4 0 5-6 6-8 4 2-4-1-7-4-6-3 0-6 1-7 3z" fill="#45c87c" /><path d="M8 7c-5 3-3 11 5 12-10 4-17-6-11-12z" fill="#0f539c" /><path d="M8 8c3-2 6 2 4 5 2 2 6 1 8-2-2 6-9 7-12 3-1-2-1-5 0-6z" fill="#d8eef5" /></g>],
  ['EC', 'line', <rect key="a" width="20" height="20" fill="#e23a34" />, <path key="b" d="M9 6H3v8h6M3 10h5M17 6h-5v8h5" stroke="#fff" strokeWidth="1.500" fill="none" />],
  ['DPrime', 'active', <path key="a" d="M0 0h20v20H0z" fill="#e11b22" />, <path key="b" d="M12 1l6 7M18 11l-7 9M13 8h7" stroke="#fff" strokeWidth="2.500" fill="none" />],
  ['MT', 'line', <rect key="a" width="20" height="20" fill="#07094d" />, <path key="b" d="M3 14c5 3 13-1 14-6M4 12l3-3 2 2 3-5 2 2" stroke="#fff" strokeWidth="1.500" fill="none" />],
];

function Taskbar() {
  return (
    <div className="flex h-[50px] shrink-0 items-center bg-linear-to-r from-[#d3d8e2] via-[#e8dad5] via-30% to-[#d9dae6] text-[15px] whitespace-nowrap text-[#111]">
      <button type="button" aria-label="开始" className="ml-[6px]">
        <svg width="20" height="20" viewBox="0 0 20 20"><path d="M0 3l8-1v8H0zM9 2l11-2v10H9zM0 11h8v8l-8-1zM9 11h11v9L9 18z" /></svg>
      </button>
      <button type="button" aria-label="搜索" className="ml-[25px]">
        <svg width="21" height="21" viewBox="0 0 21 21" fill="none" stroke="#111" strokeWidth="2"><circle cx="13" cy="8" r="7" /><path d="M8 13l-7 7" /></svg>
      </button>
      <span className="ml-[18px] h-[34px] w-[4px] border-x border-[#222]" />
      <div className="ml-[13px] flex h-full">
        {apps.map(([name, state, a, b]) => (
          <button type="button" aria-label={name} key={name} className={`flex w-[46px] flex-col items-center ${state === 'active' ? 'bg-white/60' : ''}`}>
            <svg width="20" height="20" viewBox="0 0 20 20" className="mt-[9px]">{a}{b}</svg>
            {state && <span className={`mt-[6px] h-[3px] bg-[#0078d7] ${state === 'active' ? 'w-full' : 'w-[35px]'}`} />}
          </button>
        ))}
      </div>
      <svg width="28" height="30" viewBox="0 0 28 30" className="ml-auto">
        <rect y="4" width="28" height="25" rx="3" fill="#b974f0" />
        <rect y="4" width="28" height="7" rx="3" fill="#cf96f8" />
        <path d="M6 1v6M23 1v6" stroke="#a45ce8" strokeWidth="3" />
        <g fill="#eed6ff"><circle cx="9" cy="17" r="2.500" /><circle cx="19" cy="17" r="2.500" /><circle cx="9" cy="24" r="2.500" /><circle cx="19" cy="24" r="2.500" /></g>
      </svg>
      <span className="ml-[10px]">星期一</span>
      <svg width="16" height="10" viewBox="0 0 16 10" fill="none" stroke="#111" strokeWidth="1.500" className="ml-[27px]"><path d="M1 9l7-7 7 7" /></svg>
      <svg width="20" height="16" viewBox="0 0 20 16" fill="none" stroke="#111" strokeWidth="1.500" className="ml-[11px]"><path d="M1 5h3l4-4v14l-4-4H1zM12 5l6 6M18 5l-6 6" /></svg>
      <svg width="20" height="20" viewBox="0 0 20 20" fill="none" className="ml-[10px]">
        <path d="M10 1v18M3 6h14v7H3z" stroke="#222" strokeWidth="4" />
        <path d="M10 2v16M3 6h14v7H3z" stroke="#fff" strokeWidth="1.500" />
      </svg>
      <svg width="20" height="20" viewBox="0 0 20 20" className="ml-[15px]">
        <path d="M1 3l15-3 4 15-3 3-13 2-3-3z" fill="#f4571b" />
        <path d="M15 5c-4-1-9 0-9 2s8 2 8 4-4 3-9 2" stroke="#fff" strokeWidth="3" fill="none" />
      </svg>
      <p className="ml-[22px] w-[76px] text-center leading-[23px]">18:16<br />2026/3/23</p>
      <button type="button" aria-label="通知" className="ml-[9px] flex h-full w-[50px] items-center justify-center bg-white/20">
        <svg width="20" height="20" viewBox="0 0 20 20" fill="none" stroke="#111" strokeWidth="1.500"><path d="M1 1h18v15h-6l-3 3-3-3H1z" /></svg>
      </button>
      <span className="w-[16px]" />
    </div>
  );
}

function Watermark() {
  return (
    <svg className="pointer-events-none absolute inset-0 h-full w-full" aria-hidden="true">
      <defs>
        <pattern id="wm" x="38" y="-60" width="250" height="250" patternUnits="userSpaceOnUse">
          <text transform="translate(22 238) rotate(-35)" fontFamily="Liberation Sans" fontSize="38" fill="#ffffff" fillOpacity=".13" stroke="#808080" strokeOpacity=".28">EAHub.cn</text>
        </pattern>
      </defs>
      <rect width="100%" height="100%" fill="url(#wm)" />
    </svg>
  );
}

export default function App() {
  return (
    <div className={`relative flex h-screen flex-col overflow-hidden bg-[#f0f0f0] text-black ${UI}`}>
      <TitleBar />
      <MenuBar />
      <Toolbars />
      <main className="flex min-h-0 flex-1 border-b border-[#a0a0a0] pt-px pr-[4px]">
        <MarketWatch />
        <Navigator />
        <Chart />
      </main>
      <Tester />
      <StatusBar />
      <Taskbar />
      <div className="absolute top-0 right-[220px] h-[10px] w-[128px] rounded-b-lg bg-linear-to-r from-[#56c8ff] to-[#18acf2]" />
      <Watermark />
    </div>
  );
}
